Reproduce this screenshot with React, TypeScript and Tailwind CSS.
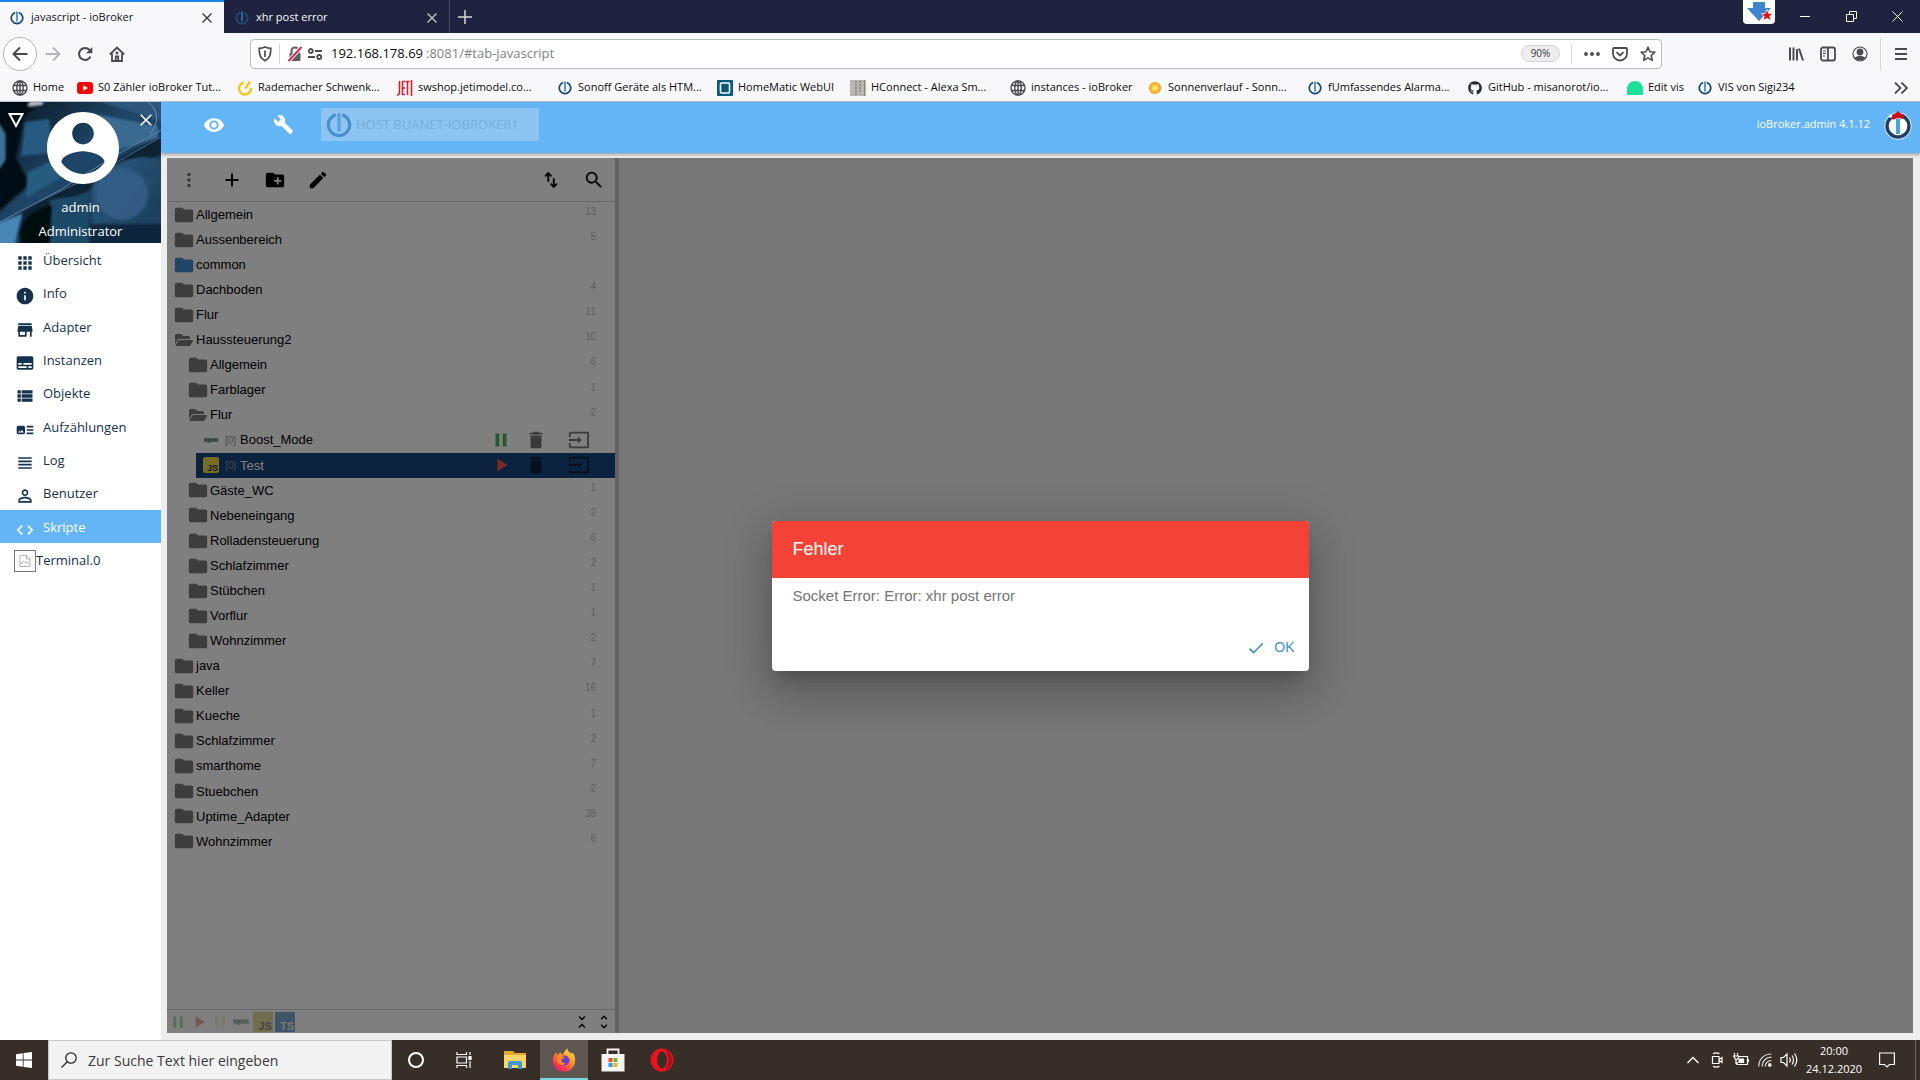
import type { ReactNode } from "react";
import {
  MdAdd,
  MdApps,
  MdArtTrack,
  MdBuild,
  MdCheck,
  MdCode,
  MdCreateNewFolder,
  MdDelete,
  MdEdit,
  MdFolder,
  MdInfo,
  MdInput,
  MdMoreVert,
  MdPause,
  MdPersonOutline,
  MdPlayArrow,
  MdSearch,
  MdStore,
  MdSubtitles,
  MdUnfoldLess,
  MdUnfoldMore,
  MdViewHeadline,
  MdViewList,
  MdVisibility,
} from "react-icons/md";
import { FaFolderOpen, FaGithub } from "react-icons/fa";

const IoBrokerLogo = ({ className = "", ring = "#1f4a73", bar = "#3d8fc4" }) => (
  <svg viewBox="0 0 24 24" className={className} fill="none">
    <path d="M9 2.6a9.8 9.8 0 1 0 6 0" stroke={ring} strokeWidth="3" />
    <path d="M12 1v17" stroke={bar} strokeWidth="3" />
  </svg>
);

const Globe = () => (
  <svg viewBox="0 0 16 16" className="size-4" fill="none" stroke="#4a4a4f" strokeWidth="1.4">
    <circle cx="8" cy="8" r="7" />
    <ellipse cx="8" cy="8" rx="3.2" ry="7" />
    <path d="M1.5 5.5h13M1.5 10.5h13M8 1v14" />
  </svg>
);

const CloseX = ({ className = "size-3" }) => (
  <svg viewBox="0 0 12 12" className={className} fill="none" stroke="currentColor" strokeWidth="1.4">
    <path d="M1.5 1.5l9 9M10.5 1.5l-9 9" />
  </svg>
);

const BlocklyIcon = ({ className = "" }) => (
  <svg viewBox="0 0 16 8" className={className}>
    <path d="M1 2h14v4H8L7 7H5L4 6H1z" fill="#8ca392" />
    <path d="M2 4h12" stroke="#56655a" strokeWidth="1.2" strokeDasharray="2 1" />
  </svg>
);

/* ---------- browser window ---------- */

const TabBar = () => (
  <div className="flex h-[33px] shrink-0 bg-[#20233f] text-[11px]">
    <div className="flex w-56 items-center border-t-2 border-[#1a86e8] bg-[#f8f8fa] pr-[11px] pl-2.5 text-[#15141a]">
      <IoBrokerLogo className="size-3.5" />
      <span className="ml-[7px] grow">javascript - ioBroker</span>
      <button aria-label="Tab schließen" className="text-[#38383d]">
        <CloseX />
      </button>
    </div>
    <div className="flex w-[226px] items-center border-r border-[#4c4e66] pt-0.5 pr-[11px] pl-[11px] text-[#f9f9fa]">
      <IoBrokerLogo className="size-3.5" bar="#2f6ea5" />
      <span className="ml-[7px] grow">xhr post error</span>
      <button aria-label="Tab schließen" className="text-[#c5c5d0]">
        <CloseX />
      </button>
    </div>
    <button aria-label="Neuer Tab" className="w-8 pl-2 text-[#d6d6df]">
      <svg viewBox="0 0 14 14" className="size-3.5" stroke="currentColor" strokeWidth="1.5">
        <path d="M7 0v14M0 7h14" />
      </svg>
    </button>
    <div className="grow" />
    <div className="mr-[7px] flex h-6 w-8 justify-center rounded-b bg-white">
      <svg viewBox="0 0 32 24" className="h-6 w-8">
        <path d="M10 2h12v6h6L16 21 4 8h6z" fill="#3f85cd" />
        <path
          d="M24 9.5l1.8 4h4l-3 2.8 1.2 4.3-4-2.4-4 2.4 1.2-4.3-3-2.8h4z"
          fill="#f00d12"
          stroke="#fff"
          strokeWidth=".7"
        />
      </svg>
    </div>
    <div className="flex text-white">
      <button aria-label="Minimieren" className="flex w-[46px] items-center justify-center">
        <span className="h-px w-2.5 bg-white" />
      </button>
      <button aria-label="Verkleinern" className="flex w-[46px] items-center justify-center">
        <svg viewBox="0 0 11 11" className="size-[11px]" fill="none" stroke="currentColor">
          <path d="M.5 3.5h7v7h-7zM3.5 3V.5h7v7H8" />
        </svg>
      </button>
      <button aria-label="Schließen" className="flex w-[46px] items-center justify-center">
        <svg viewBox="0 0 11 11" className="size-[11px]" stroke="currentColor">
          <path d="M.5.5l10 10M10.5.5l-10 10" />
        </svg>
      </button>
    </div>
  </div>
);

const NavBar = () => (
  <div className="flex h-[41px] shrink-0 items-center bg-[#f8f8fa] text-[#4a4a4f]">
    <button
      aria-label="Zurück"
      className="ml-[3px] flex size-[34px] items-center justify-center rounded-full border border-[#b4b4b8] bg-white"
    >
      <svg viewBox="0 0 16 16" className="size-4" fill="none" stroke="currentColor" strokeWidth="2">
        <path d="M15.5 8H1.5M8 1.5L1.5 8 8 14.5" />
      </svg>
    </button>
    <button aria-label="Vor" className="flex w-8 justify-center text-[#b5b5b9]">
      <svg viewBox="0 0 16 16" className="size-4" fill="none" stroke="currentColor" strokeWidth="1.8">
        <path d="M.5 8h14M8 1.5L14.5 8 8 14.5" />
      </svg>
    </button>
    <button aria-label="Neu laden" className="flex w-8 justify-center">
      <svg viewBox="0 0 16 16" className="size-4" fill="none" stroke="currentColor" strokeWidth="2">
        <path d="M13.5 10.5A6 6 0 1 1 12.6 4" />
        <path d="M15.3 1v6.3H9z" fill="currentColor" stroke="none" />
      </svg>
    </button>
    <button aria-label="Startseite" className="flex w-8 justify-center">
      <svg viewBox="0 0 16 16" className="size-4" fill="none" stroke="currentColor" strokeWidth="1.8">
        <path d="M.8 8.5L8 1.5l7.2 7M3 7.5V15h10V7.5" />
        <path d="M6.8 15v-4.5h2.4V15" />
        <circle cx="8" cy="7" r=".6" />
      </svg>
    </button>

    <div className="mr-[118px] ml-[117px] flex h-[30px] grow items-center rounded-sm border border-[#b8b8bb] bg-white">
      <svg viewBox="0 0 14 16" className="ml-[7px] h-4 w-3.5" fill="none" stroke="currentColor" strokeWidth="1.7">
        <path d="M7 1C5 2 3 2.3 1.2 2.3c0 6 .8 10 5.8 12.5 5-2.5 5.8-6.5 5.8-12.5C11 2.3 9 2 7 1z" />
        <path d="M7 4.5V11" />
      </svg>
      <span className="mx-[7px] h-5 w-px bg-[#d7d7db]" />
      <svg viewBox="0 0 16 16" className="size-4" fill="none">
        <path d="M4.5 7V5a3.5 3.5 0 0 1 7 0v2" stroke="#5c5c61" strokeWidth="2" />
        <rect x="2.5" y="7" width="11" height="8" rx="1" fill="#5c5c61" />
        <path d="M1.5 15l13-14" stroke="#fff" strokeWidth="4" />
        <path d="M1.5 15l13-14" stroke="#d7264c" strokeWidth="1.9" />
      </svg>
      <svg viewBox="0 0 16 16" className="ml-1 size-4" fill="none" stroke="currentColor" strokeWidth="1.8">
        <circle cx="3.8" cy="5" r="2" />
        <circle cx="12.2" cy="11" r="2" />
        <path d="M8 5h7M1 11h7" />
      </svg>
      <input
        aria-label="Adresse"
        className="ml-2 w-[95px] text-[13px] text-[#0c0c0d] outline-none"
        defaultValue="192.168.178.69"
      />
      <span className="grow text-[13px] text-[#818186]">:8081/#tab-javascript</span>
      <button className="h-[17px] w-[39px] rounded-full border border-[#d2d2d5] bg-[#ededf0] text-[10px] leading-[15px] text-[#38383d]">
        90%
      </button>
      <span className="mx-[11px] h-5 w-px bg-[#d7d7db]" />
      <button aria-label="Seitenaktionen" className="flex w-[18px] justify-center">
        <svg viewBox="0 0 16 4" className="h-1 w-4" fill="currentColor">
          <circle cx="2" cy="2" r="1.9" />
          <circle cx="8" cy="2" r="1.9" />
          <circle cx="14" cy="2" r="1.9" />
        </svg>
      </button>
      <button aria-label="Pocket" className="ml-2.5 flex w-[18px] justify-center">
        <svg viewBox="0 0 16 16" className="size-4" fill="none" stroke="currentColor" strokeWidth="1.8">
          <path d="M2 2h12a1 1 0 0 1 1 1v4.5a7 7 0 0 1-14 0V3a1 1 0 0 1 1-1z" />
          <path d="M4.5 6.2L8 9.5l3.5-3.3" />
        </svg>
      </button>
      <button aria-label="Lesezeichen" className="mr-1 ml-2.5 flex w-[18px] justify-center">
        <svg
          viewBox="0 0 16 16"
          className="size-4"
          fill="none"
          stroke="currentColor"
          strokeWidth="1.6"
          strokeLinejoin="round"
        >
          <path d="M8 1.2l2 4.5 4.9.5-3.7 3.3 1.1 4.9L8 11.9l-4.3 2.5 1.1-4.9L1.1 6.2 6 5.7z" />
        </svg>
      </button>
    </div>

    <button aria-label="Bibliothek" className="flex w-8 justify-center">
      <svg viewBox="0 0 16 16" className="size-4" fill="none" stroke="currentColor" strokeWidth="2">
        <path d="M2 1.5v13M5.5 1.5v13M9 3v11.5M11 2.5l4 12" />
      </svg>
    </button>
    <button aria-label="Sidebar" className="flex w-8 justify-center">
      <svg viewBox="0 0 16 16" className="size-4" fill="none" stroke="currentColor" strokeWidth="1.8">
        <rect x="1" y="1.5" width="14" height="13" rx="2" />
        <path d="M8 2v12" />
        <path d="M3 5h3M3 7.5h3M3 10h2" strokeWidth="1" />
      </svg>
    </button>
    <button aria-label="Konto" className="flex w-8 justify-center">
      <svg viewBox="0 0 16 16" className="size-4" fill="none" stroke="currentColor" strokeWidth="1.2">
        <circle cx="8" cy="8" r="7" />
        <circle cx="8" cy="6" r="2.8" fill="currentColor" />
        <path d="M3.5 12c1-2 8-2 9 0-2 2.2-7 2.2-9 0z" fill="currentColor" />
      </svg>
    </button>
    <span className="mx-1 h-8 w-px bg-[#d7d7db]" />
    <button aria-label="Menü" className="mr-[3px] flex w-8 justify-center">
      <svg viewBox="0 0 12 14" className="h-3.5 w-3" stroke="currentColor" strokeWidth="1.8">
        <path d="M0 2h12M0 7h12M0 12h12" />
      </svg>
    </button>
  </div>
);

const bookmarks: { label: string; width: string; icon: ReactNode }[] = [
  { label: "Home", width: "w-[65px]", icon: <Globe /> },
  {
    label: "S0 Zähler ioBroker Tut...",
    width: "w-40",
    icon: (
      <svg viewBox="0 0 16 16" className="size-4">
        <rect y="2" width="16" height="12" rx="3" fill="#f00" />
        <path d="M6.2 5.2v5.6L11 8z" fill="#fff" />
      </svg>
    ),
  },
  {
    label: "Rademacher Schwenk...",
    width: "w-40",
    icon: (
      <svg viewBox="0 0 16 16" className="size-4" fill="none" stroke="#f5c518" strokeWidth="2.4">
        <path d="M7 2.6A6 6 0 1 0 14 8M8.5 8.5l4.5-7" />
      </svg>
    ),
  },
  {
    label: "swshop.jetimodel.co...",
    width: "w-40",
    icon: (
      <svg viewBox="0 0 16 16" className="size-4" fill="none" stroke="#d3202c" strokeWidth="1.6">
        <path d="M2.5 1v11c0 2-.8 3-2.500 3M5.500 1v14M5.500 1.500h2.500M5.500 8h2.500M5.500 14.500h2.500M8.500 1.500h4M10.500 1v14M14.500 0v16" />
      </svg>
    ),
  },
  { label: "Sonoff Geräte als HTM...", width: "w-40", icon: <IoBrokerLogo className="size-3.5" /> },
  {
    label: "HomeMatic WebUI",
    width: "w-[133px]",
    icon: (
      <svg viewBox="0 0 16 16" className="size-4">
        <rect width="16" height="16" rx="1" fill="#075b7c" />
        <rect x="3.5" y="3" width="9" height="10" rx="1" fill="none" stroke="#fff" strokeWidth="1.6" />
      </svg>
    ),
  },
  {
    label: "HConnect - Alexa Sm...",
    width: "w-40",
    icon: (
      <svg viewBox="0 0 16 16" className="size-4">
        <path d="M0 0h16v16H0z" fill="#bcb7ae" />
        <path d="M6 1v14M10 1v12" stroke="#8b8e94" strokeWidth="1.8" strokeDasharray="2 1" />
        <path d="M14.5 0v16" stroke="#8c8880" />
      </svg>
    ),
  },
  { label: "instances - ioBroker", width: "w-[137px]", icon: <Globe /> },
  {
    label: "Sonnenverlauf - Sonn...",
    width: "w-40",
    icon: <span className="size-3 rounded-full bg-radial from-[#ffef7a] from-10% via-[#fbb022] to-[#ee8b14]" />,
  },
  { label: "fUmfassendes Alarma...", width: "w-40", icon: <IoBrokerLogo className="size-3.5" /> },
  { label: "GitHub - misanorot/io...", width: "w-40", icon: <FaGithub className="size-3.5 text-[#24292e]" /> },
  {
    label: "Edit vis",
    width: "w-[70px]",
    icon: (
      <svg viewBox="0 0 16 16" className="size-4">
        <path d="M0 14V9a8 8 0 0 1 16 0v5a1 1 0 0 1-1 1H1a1 1 0 0 1-1-1z" fill="#1de09a" />
      </svg>
    ),
  },
  { label: "VIS von Sigi234", width: "w-[110px]", icon: <IoBrokerLogo className="size-3.5" /> },
];

const BookmarkBar = () => (
  <div className="flex h-7 shrink-0 items-center overflow-hidden border-b border-[#b9bfc8] bg-[#f8f8fa] pl-3 text-[11px] text-[#0c0c0d]">
    {bookmarks.map((b) => (
      <a key={b.label} href="#bookmark" className={`flex shrink-0 items-center gap-[5px] whitespace-nowrap ${b.width}`}>
        <span className="flex w-4 shrink-0 justify-center">{b.icon}</span>
        {b.label}
      </a>
    ))}
    <button aria-label="Weitere Lesezeichen" className="mr-3 ml-auto">
      <svg viewBox="0 0 14 12" className="h-3 w-3.5" fill="none" stroke="#4a4a4f" strokeWidth="1.8">
        <path d="M1 .5L6.5 6 1 11.5M7.5.5L13 6l-5.5 5.5" />
      </svg>
    </button>
  </div>
);

/* ---------- ioBroker admin ---------- */

const menu = [
  { label: "Übersicht", icon: MdApps },
  { label: "Info", icon: MdInfo },
  { label: "Adapter", icon: MdStore },
  { label: "Instanzen", icon: MdSubtitles },
  { label: "Objekte", icon: MdViewList },
  { label: "Aufzählungen", icon: MdArtTrack },
  { label: "Log", icon: MdViewHeadline },
  { label: "Benutzer", icon: MdPersonOutline },
  { label: "Skripte", icon: MdCode, active: true },
];

const ProfileBackground = () => (
  <svg viewBox="0 0 161 141" preserveAspectRatio="none" className="absolute inset-0 size-full">
    <defs>
      <linearGradient id="sky" x1="0" y1="0" x2="1" y2="1">
        <stop offset="0" stopColor="#0a1420" />
        <stop offset=".45" stopColor="#1f4668" />
        <stop offset="1" stopColor="#12324e" />
      </linearGradient>
      <linearGradient id="glass" x1="0" y1="0" x2="1" y2="1">
        <stop offset="0" stopColor="#2c5c82" />
        <stop offset="1" stopColor="#173752" />
      </linearGradient>
      <filter id="soft">
        <feGaussianBlur stdDeviation="1" />
      </filter>
    </defs>
    <path d="M0 0h161v141H0z" fill="url(#sky)" />
    <g filter="url(#soft)">
      <path d="M-4-4h50L24 14l-8 42 14 26L-4 112z" fill="#060b12" />
      <path d="M25 20l24-3 4 34-32 3z" fill="#265a80" />
      <path d="M28 70l26-12 10 16-38 22z" fill="#265b7e" />
      <path d="M84 10l74 14v12l-40 12z" fill="#3a6a91" />
      <path d="M88-4h77v24z" fill="#2f577c" />
      <path d="M30 0h14l-2 3-14 1z" fill="#b9c5d2" />
      <path d="M-2 20l7 12v26l-7 10z" fill="#3c7196" />
      <path d="M165 32L90 72-4 124v22h14l20-28L165 50z" fill="#0f2133" />
      <path d="M92 84c16-24 50-36 73-24v85H92z" fill="url(#glass)" />
      <circle cx="122" cy="92" r="26" fill="#355f8a" opacity=".8" />
      <path d="M50 98l38-6v52H50z" fill="#1c4968" />
      <path d="M-4 122l26-10-8 33H-4z" fill="#4685b5" />
      <path d="M20 145c-2-24 8-36 32-42l-2 42z" fill="#05090f" />
      <path d="M90 122h75v23H90z" fill="#0b2135" opacity=".8" />
    </g>
    <path d="M161 28L118 52 60 88 0 120" stroke="#5d83a3" strokeWidth="1" fill="none" />
    <path d="M161 35L96 72 30 104" stroke="#476a88" strokeWidth="1" fill="none" />
    <path d="M148 0c10 8 12 20 2 32" stroke="#6f8fab" strokeWidth="1" fill="none" />
  </svg>
);

const Sidebar = () => (
  <aside className="w-[161px] shrink-0 bg-white text-[13px] text-[#14324e]">
    <div className="relative h-[141px] overflow-hidden text-white">
      <ProfileBackground />
      <div className="relative flex justify-between px-2 pt-2">
        <button aria-label="Menü einklappen" className="h-5">
          <svg viewBox="0 0 16 16" className="size-4" fill="none" stroke="currentColor" strokeWidth="2">
            <path d="M1.5 2h13L8 14z" />
          </svg>
        </button>
        <button aria-label="Menü schließen" className="h-5">
          <CloseX className="size-3.5" />
        </button>
      </div>
      <svg viewBox="2 2 20 20" className="absolute top-2.5 left-[47px] size-[72px]">
        <path
          fill="#fff"
          d="M12 2C6.48 2 2 6.48 2 12s4.48 10 10 10 10-4.48 10-10S17.52 2 12 2zm0 3c1.66 0 3 1.34 3 3s-1.34 3-3 3-3-1.34-3-3 1.34-3 3-3zm0 14.2c-2.5 0-4.71-1.28-6-3.22.03-1.99 4-3.08 6-3.08 1.99 0 5.97 1.09 6 3.08-1.29 1.94-3.5 3.22-6 3.22z"
        />
      </svg>
      <div className="relative pt-[65px] text-center leading-6">
        <p>admin</p>
        <p>Administrator</p>
      </div>
    </div>
    <nav>
      <ul className="grid h-[300px] grid-rows-9">
        {menu.map(({ label, icon: Icon, active }) => (
          <li key={label} className={active ? "bg-[#64b5f6] text-white" : ""}>
            <a href="#tab" className="flex h-full pl-[15px]">
              <Icon className="mt-2.5 size-5" />
              <span className="ml-2 leading-[35px]">{label}</span>
            </a>
          </li>
        ))}
      </ul>
      <a href="#terminal" className="flex items-center pt-[7px] pl-3.5">
        <span className="flex size-[22px] items-center justify-center border border-[#777]">
          <svg viewBox="0 0 12 12" className="size-3" fill="none" stroke="#b5b5b5">
            <path d="M1 .5h7l3 3v8H1zM7.5 1v3H11M2 9l3-3 2 2 1.5-1L10 9" />
          </svg>
        </span>
        Terminal.0
      </a>
    </nav>
  </aside>
);

const Header = () => (
  <header className="flex h-[51px] shrink-0 items-center bg-[#64b5f6] pb-1.5 text-white shadow-[0_2px_3px_rgba(0,0,0,0.3)]">
    <button aria-label="Sichtbarkeit" className="ml-[42px]">
      <MdVisibility className="size-[22px]" />
    </button>
    <button aria-label="Einstellungen" className="ml-12">
      <MdBuild className="size-[21px]" />
    </button>
    <button className="ml-[27px] flex h-[33px] w-[218px] items-center bg-[#8dc4f1] pl-[5px] text-[13px] text-[#74afe0]">
      <IoBrokerLogo className="mr-1 size-[26px]" ring="#488fcb" bar="#5aa3de" />
      HOST BUANET-IOBROKER1
    </button>
    <span className="ml-auto text-[11px]">ioBroker.admin 4.1.12</span>
    <svg viewBox="0 0 30 30" className="mr-[7px] ml-[13px] size-[30px]">
      <circle cx="15" cy="16" r="13.5" fill="#fff" />
      <circle cx="15" cy="16" r="11" fill="none" stroke="#1d3f66" strokeWidth="3.4" />
      <path d="M15 9v15" stroke="#42a5dc" strokeWidth="4" />
      <path d="M8 6l5-3 2-2 2 2 4 2-1 4c-3-1-7-1-10 1z" fill="#d00d1c" />
      <circle cx="7.5" cy="6" r="1.8" fill="#fff" />
    </svg>
  </header>
);

type Entry = { name: string; level: 0 | 1 | 2; count?: number; kind?: "open" | "blue" | "blockly" | "js" };

const tree: Entry[] = [
  { name: "Allgemein", level: 0, count: 13 },
  { name: "Aussenbereich", level: 0, count: 5 },
  { name: "common", level: 0, kind: "blue" },
  { name: "Dachboden", level: 0, count: 4 },
  { name: "Flur", level: 0, count: 11 },
  { name: "Haussteuerung2", level: 0, count: 10, kind: "open" },
  { name: "Allgemein", level: 1, count: 6 },
  { name: "Farblager", level: 1, count: 1 },
  { name: "Flur", level: 1, count: 2, kind: "open" },
  { name: "Boost_Mode", level: 2, kind: "blockly" },
  { name: "Test", level: 2, kind: "js" },
  { name: "Gäste_WC", level: 1, count: 1 },
  { name: "Nebeneingang", level: 1, count: 2 },
  { name: "Rolladensteuerung", level: 1, count: 6 },
  { name: "Schlafzimmer", level: 1, count: 2 },
  { name: "Stübchen", level: 1, count: 1 },
  { name: "Vorflur", level: 1, count: 1 },
  { name: "Wohnzimmer", level: 1, count: 2 },
  { name: "java", level: 0, count: 7 },
  { name: "Keller", level: 0, count: 16 },
  { name: "Kueche", level: 0, count: 1 },
  { name: "Schlafzimmer", level: 0, count: 2 },
  { name: "smarthome", level: 0, count: 7 },
  { name: "Stuebchen", level: 0, count: 2 },
  { name: "Uptime_Adapter", level: 0, count: 38 },
  { name: "Wohnzimmer", level: 0, count: 6 },
];

const FolderRow = ({ entry }: { entry: Entry }) => (
  <li className={`flex items-center pr-[19px] ${entry.level ? "pl-5" : "pl-1.5"}`}>
    {entry.kind === "open" ? (
      <FaFolderOpen className="mx-0.5 size-[18px] text-[#7a7a7a]" />
    ) : (
      <MdFolder className={`size-[22px] ${entry.kind === "blue" ? "text-[#448aca]" : "text-[#7a7a7a]"}`} />
    )}
    <span className="ml-px grow">{entry.name}</span>
    <span className="pb-1.5 text-[10px] text-[#bcbcbc]">{entry.count}</span>
  </li>
);

const ScriptRow = ({ entry }: { entry: Entry }) => {
  const selected = entry.kind === "js";
  return (
    <li className={`ml-[29px] flex items-center pl-[7px] ${selected ? "bg-[#16467c] text-white" : ""}`}>
      {selected ? (
        <span className="flex size-4 items-end justify-end rounded-xs bg-[#f0db4f] px-px text-[9px] leading-[10px] font-bold text-[#323330]">
          JS
        </span>
      ) : (
        <BlocklyIcon className="w-4" />
      )}
      <span className={`ml-1.5 w-[15px] text-[10px] ${selected ? "text-[#8590a0]" : "text-[#9a9a9a]"}`}>[0]</span>
      <span className="grow">{entry.name}</span>
      <div className={`flex items-center ${selected ? "text-[#0a1f3a]" : "text-[#757575]"}`}>
        <button aria-label={selected ? "Starten" : "Pausieren"} className="flex w-[27px] justify-center">
          {selected ? (
            <MdPlayArrow className="size-[22px] text-[#f0564a]" />
          ) : (
            <MdPause className="size-[22px] text-[#4caf50]" />
          )}
        </button>
        <button aria-label="Löschen" className="flex w-[43px] justify-center">
          <MdDelete className="size-[22px]" />
        </button>
        <button aria-label="Öffnen" className="mr-[15px] flex w-[43px] justify-center">
          <MdInput className="size-[22px]" />
        </button>
      </div>
    </li>
  );
};

const ScriptList = () => (
  <section className="flex w-[448px] shrink-0 flex-col bg-white text-[13px] text-black">
    <div className="flex h-11 shrink-0 items-center border-b border-[#d0d0d0] *:flex *:w-[43px] *:justify-center">
      <button aria-label="Mehr">
        <MdMoreVert className="size-[22px] text-[#757575]" />
      </button>
      <button aria-label="Neues Skript">
        <MdAdd className="size-[22px]" />
      </button>
      <button aria-label="Neuer Ordner">
        <MdCreateNewFolder className="size-[22px]" />
      </button>
      <button aria-label="Bearbeiten">
        <MdEdit className="size-[22px]" />
      </button>
      <button aria-label="Sortieren" className="ml-auto">
        <svg viewBox="0 0 24 24" className="size-[22px]" fill="none" stroke="currentColor" strokeWidth="2">
          <path d="M9 14V5M5.5 8L9 4.5 12.5 8M15 10v9M11.5 16l3.5 3.5 3.5-3.5" />
        </svg>
      </button>
      <button aria-label="Suchen">
        <MdSearch className="size-[22px]" />
      </button>
    </div>
    <ul className="mb-auto grid h-[652px] auto-rows-fr">
      {tree.map((entry, i) =>
        entry.level === 2 ? <ScriptRow key={i} entry={entry} /> : <FolderRow key={i} entry={entry} />
      )}
    </ul>
    <div className="flex h-6 items-center border-t border-[#d0d0d0]">
      <button aria-label="Laufende Skripte" className="flex w-[21px] justify-center opacity-40">
        <MdPause className="size-5 text-[#4caf50]" />
      </button>
      <button aria-label="Gestoppte Skripte" className="flex w-[21px] justify-center opacity-50">
        <MdPlayArrow className="size-5 text-[#f0564a]" />
      </button>
      <button aria-label="Pausierte Skripte" className="flex w-[21px] justify-center opacity-30">
        <MdPause className="size-5 text-[#e2d64a]" />
      </button>
      <button aria-label="Blockly" className="flex w-[22px] justify-center opacity-60">
        <BlocklyIcon className="w-[18px]" />
      </button>
      <button aria-label="JavaScript" className="flex w-[22px] justify-center">
        <span className="flex size-5 items-end justify-end bg-[#dfdc9f] px-px text-[11px] leading-3 font-bold text-[#8f8f80]">
          JS
        </span>
      </button>
      <button aria-label="TypeScript" className="flex w-[22px] justify-center">
        <span className="flex size-5 items-end justify-end bg-[#7fa9cc] px-px text-[11px] leading-3 font-bold text-[#e8eef4]">
          TS
        </span>
      </button>
      <button aria-label="Alle einklappen" className="ml-auto flex w-[22px] justify-center">
        <MdUnfoldLess className="size-[18px]" />
      </button>
      <button aria-label="Alle ausklappen" className="flex w-[22px] justify-center">
        <MdUnfoldMore className="size-[18px]" />
      </button>
    </div>
  </section>
);

const ErrorDialog = () => (
  <div className="absolute inset-0 flex items-center justify-center bg-black/50">
    <div
      role="alertdialog"
      aria-labelledby="error-title"
      className="w-[537px] overflow-hidden rounded bg-white shadow-[0_11px_15px_-7px_rgba(0,0,0,0.2),0_24px_38px_3px_rgba(0,0,0,0.14),0_9px_46px_8px_rgba(0,0,0,0.12)]"
    >
      <h2 id="error-title" className="bg-[#f44336] px-[21px] text-[18px] leading-[57px] text-white">
        Fehler
      </h2>
      <p className="h-[46px] px-[21px] pt-[7px] text-[15px] text-[#757575]">Socket Error: Error: xhr post error</p>
      <div className="flex h-[47px] justify-end pr-3.5">
        <button className="flex h-12 items-center gap-2 text-[14px] text-[#3d94cc]">
          <MdCheck className="size-5" />
          OK
        </button>
      </div>
    </div>
  </div>
);

/* ---------- Windows taskbar ---------- */

const Taskbar = () => (
  <footer className="flex h-10 shrink-0 bg-[#382e28] text-white">
    <button aria-label="Start" className="flex w-12 items-center justify-center">
      <svg viewBox="0 0 16 16" className="size-4" fill="#fff">
        <path d="M0 2.2l6.8-1v6.4H0zM7.6 1.1L16 0v7.6H7.6zM0 8.4h6.8v6.4l-6.8-1zM7.6 8.4H16V16l-8.4-1.1z" />
      </svg>
    </button>
    <label className="flex w-[344px] items-center border border-[#c5c5c5] bg-[#f2f2f2] pl-3 text-[#2b2b2b]">
      <svg viewBox="0 0 16 16" className="size-4" fill="none" stroke="currentColor" strokeWidth="1.3">
        <circle cx="10" cy="6" r="5.2" />
        <path d="M6.3 9.7L.5 15.5" />
      </svg>
      <input
        aria-label="Suche"
        placeholder="Zur Suche Text hier eingeben"
        className="ml-[11px] grow text-[14px] outline-none placeholder:text-[#3a3a3a]"
      />
    </label>
    <button aria-label="Cortana" className="flex w-12 items-center justify-center">
      <span className="size-4 rounded-full border-2 border-white" />
    </button>
    <button aria-label="Aktive Anwendungen" className="flex w-12 items-center justify-center">
      <svg viewBox="0 0 16 16" className="size-4" fill="none" stroke="#fff" strokeWidth="1.2">
        <path d="M1 0v2.5h9.5V0M1 5h9.5v6H1zM1 16v-2.5h9.5V16M14 0v3M14 9v7" />
        <path d="M13 4.5h2v3h-2z" fill="#fff" />
      </svg>
    </button>
    <button aria-label="Explorer" className="ml-[3px] flex w-12 items-center justify-center">
      <svg viewBox="0 0 22 20" className="h-5 w-[22px]">
        <path d="M0 1h9l2 2h11v15H0z" fill="#e2a92e" />
        <path d="M0 5h22v13H0z" fill="#fbd56a" />
        <path d="M4 19v-6a2 2 0 0 1 2-2h10a2 2 0 0 1 2 2v6h-4v-4H8v4z" fill="#3f97d3" />
      </svg>
    </button>
    <button
      aria-label="Firefox"
      className="ml-px flex w-12 items-center justify-center border-b-2 border-[#76d9e0] bg-[#5f5751] pt-0.5"
    >
      <svg viewBox="0 0 24 24" className="size-6">
        <defs>
          <linearGradient id="fox" x1=".9" y1="0" x2=".2" y2="1">
            <stop offset="0" stopColor="#fff44f" />
            <stop offset=".4" stopColor="#ff9a1f" />
            <stop offset=".75" stopColor="#ff3f4b" />
            <stop offset="1" stopColor="#e31587" />
          </linearGradient>
        </defs>
        <path
          d="M12 23.5C5.500 23.5.8 18.8.8 12.5c0-4 1.600-6.500 3.600-8.300 0 1.200.5 2.100 1.100 2.700C6.500 5.500 8 4.600 9.500 4.500c-.5 1 0 2 1 2.500C12 4.500 13 2 15.500.5c0 3 2.500 4.200 4.800 5.500-.1-1-.3-1.600-.6-2.300 2.500 2.300 3.500 5.600 3.500 8.800 0 6.300-4.800 11-11.200 11z"
          fill="url(#fox)"
        />
        <circle cx="12.5" cy="12.5" r="5" fill="#6a3fd0" />
        <path d="M5.5 9c2-1.500 5-1 7.500.5-1.500 1-3 1-3.500 2.500-.4 2 1.500 3.500 4 3-2.500 3.500-8.500 2-8.500-3.500z" fill="#ff8a1c" />
      </svg>
    </button>
    <button aria-label="Store" className="ml-px flex w-12 items-center justify-center">
      <svg viewBox="0 0 24 24" className="size-6">
        <path d="M6.5 6V1.500h11V6" fill="none" stroke="#f5f5f5" strokeWidth="1.8" />
        <path d="M.5 6h23v17.500H.5z" fill="#f5f5f5" />
        <path d="M7.5 10h4v4h-4z" fill="#e2502a" />
        <path d="M12.5 10h4v4h-4z" fill="#7cb32b" />
        <path d="M7.5 15h4v4h-4z" fill="#2b9fe0" />
        <path d="M12.5 15h4v4h-4z" fill="#f5b41d" />
      </svg>
    </button>
    <button aria-label="Opera" className="ml-px flex w-12 items-center justify-center">
      <svg viewBox="0 0 24 24" className="size-6">
        <circle cx="12" cy="12" r="11.5" fill="#e8131f" />
        <path d="M14 1a11.500 11.500 0 0 1 0 22c3-2 4.500-6 4.500-11S17 3 14 1z" fill="#a70e17" />
        <ellipse cx="12" cy="12" rx="4.8" ry="8.5" fill="#382e28" />
      </svg>
    </button>

    <div className="ml-auto flex items-center">
      <button aria-label="Ausgeblendete Symbole" className="flex w-6 justify-center">
        <svg viewBox="0 0 12 8" className="h-2 w-3" fill="none" stroke="#fff" strokeWidth="1.3">
          <path d="M.5 7L6 1.500 11.500 7" />
        </svg>
      </button>
      <button aria-label="Kamera" className="flex w-6 justify-center">
        <svg viewBox="0 0 12 16" className="h-4 w-3" fill="none" stroke="#fff" strokeWidth="1.2">
          <path d="M1.500 4.500h6.500v7H1.500zM8 7.500l3-2v5l-3-2M2 1.800C3.500.6 7 .6 8.500 1.800M2 14.200c1.500 1.200 5 1.200 6.500 0" />
        </svg>
      </button>
      <button aria-label="Akku" className="flex w-6 justify-center">
        <svg viewBox="0 0 16 14" className="h-3.5 w-4" fill="none" stroke="#fff" strokeWidth="1.2">
          <path d="M6 3.500h8.500v8H4V9M15.500 6v3M1.500 0v3M4.500 0v3M.5 3h5v2L3 7zM3 7v4" />
          <path d="M6 6h4.500v3.500H6z" fill="#fff" />
        </svg>
      </button>
      <button aria-label="Netzwerk" className="flex w-6 justify-center">
        <svg viewBox="0 0 14 14" className="size-3.5" fill="none" stroke="#ddd" strokeWidth="1.2">
          <path d="M.8 13.500C.8 6 6 1 13.500 1M4 13.500C4 8 8 4.200 13.500 4.200M7.200 13.500c0-3.500 2.800-6 6.300-6" />
          <circle cx="11.8" cy="12" r="1.3" fill="#fff" />
        </svg>
      </button>
      <button aria-label="Lautstärke" className="flex w-6 justify-center">
        <svg viewBox="0 0 18 16" className="h-4 w-[18px]" fill="none" stroke="#fff" strokeWidth="1.2">
          <path d="M1 5.500h2.500L7 2v12l-3.500-3.500H1zM9.500 5.500c1 1.500 1 3.500 0 5M12 3.500c2 2.500 2 6.500 0 9M14.500 1.500c2.800 4 2.800 9 0 13" />
        </svg>
      </button>
      <time className="flex w-[66px] flex-col text-center text-[11px] leading-[18px]">
        <span>20:00</span>
        <span>24.12.2020</span>
      </time>
      <button aria-label="Benachrichtigungen" className="mr-2 flex w-10 justify-center">
        <svg viewBox="0 0 16 16" className="size-4" fill="none" stroke="#fff" strokeWidth="1.2">
          <path d="M.6 1h14.800v11.500h-4.900L8 15l-2.500-2.500H.6z" />
        </svg>
      </button>
      <button aria-label="Desktop anzeigen" className="h-10 w-[5px] border-l border-[#6b635d]" />
    </div>
  </footer>
);

const App = () => {
  return (
    <div className="flex h-screen flex-col overflow-hidden font-['Open_Sans','Noto_Sans',sans-serif]">
      <TabBar />
      <NavBar />
      <BookmarkBar />
      <div className="flex min-h-0 grow">
        <Sidebar />
        <div className="flex min-w-0 grow flex-col bg-[#eeeeee]">
          <Header />
          <main className="relative mt-[5px] mr-[7px] mb-[7px] ml-1.5 flex min-h-0 grow bg-[#eeeeee] font-['Liberation_Sans',Arial,sans-serif]">
            <ScriptList />
            <div className="w-1 shrink-0 bg-[#c4c4c4]" />
            <ErrorDialog />
          </main>
        </div>
      </div>
      <Taskbar />
    </div>
  );
};

export default App;
